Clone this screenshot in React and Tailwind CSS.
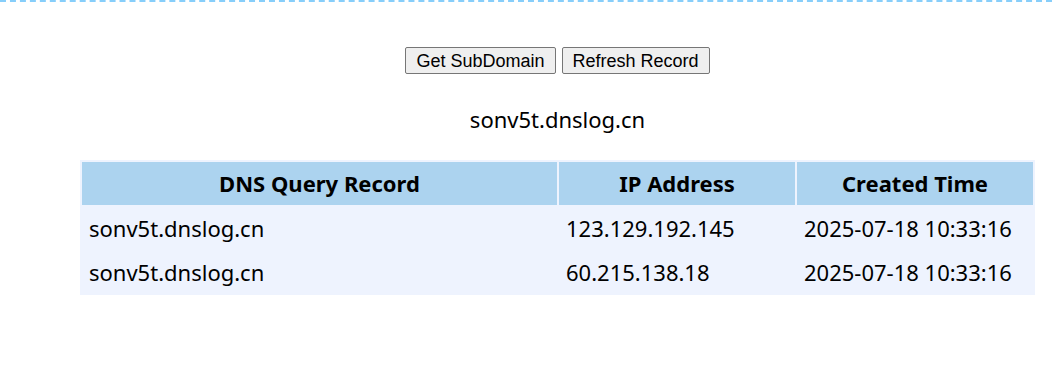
const records = [
  { domain: 'sonv5t.dnslog.cn', ip: '123.129.192.145', time: '2025-07-18 10:33:16' },
  { domain: 'sonv5t.dnslog.cn', ip: '60.215.138.18', time: '2025-07-18 10:33:16' },
];

const App = () => {
  return (
    <div className="min-h-[380px] bg-white" style={{ fontFamily: '"Noto Sans", "Open Sans", sans-serif' }}>
      <div className="border-b-2 border-dashed border-[#87cefa]" />

      <div className="pl-[63px]">
        {/* buttons */}
        <div className="flex justify-center gap-[6px] mt-[45px]">
          <button className="h-[27px] px-[10px] bg-[#efefef] border border-[#767676] rounded-[2px] text-[18px] leading-[20px] text-black font-['Liberation_Sans',Arial,sans-serif]">
            Get SubDomain
          </button>
          <button className="h-[27px] px-[10px] bg-[#efefef] border border-[#767676] rounded-[2px] text-[18px] leading-[20px] text-black font-['Liberation_Sans',Arial,sans-serif]">
            Refresh Record
          </button>
        </div>

        <div className="text-center text-[22px] text-black mt-[30px] leading-[30px]">sonv5t.dnslog.cn</div>

        {/* records */}
        <div className="px-[17px] mt-[26px]">
          <table className="w-full border-separate border-spacing-[2px] bg-[#eef3fe] text-[22px] text-black">
            <thead>
              <tr>
                <th className="bg-[#acd3ef] h-[43px] font-bold">DNS Query Record</th>
                <th className="bg-[#acd3ef] h-[43px] font-bold w-[236px]">IP Address</th>
                <th className="bg-[#acd3ef] h-[43px] font-bold w-[236px]">Created Time</th>
              </tr>
            </thead>
            <tbody>
              {records.map((r, i) => (
                <tr key={i}>
                  <td className="h-[42px] pl-[7px] pt-[1px] text-left">{r.domain}</td>
                  <td className="h-[42px] pl-[7px] pt-[1px] text-left">{r.ip}</td>
                  <td className="h-[42px] pl-[7px] pt-[1px] text-left">{r.time}</td>
                </tr>
              ))}
            </tbody>
          </table>
        </div>
      </div>
    </div>
  );
};

export default App;
